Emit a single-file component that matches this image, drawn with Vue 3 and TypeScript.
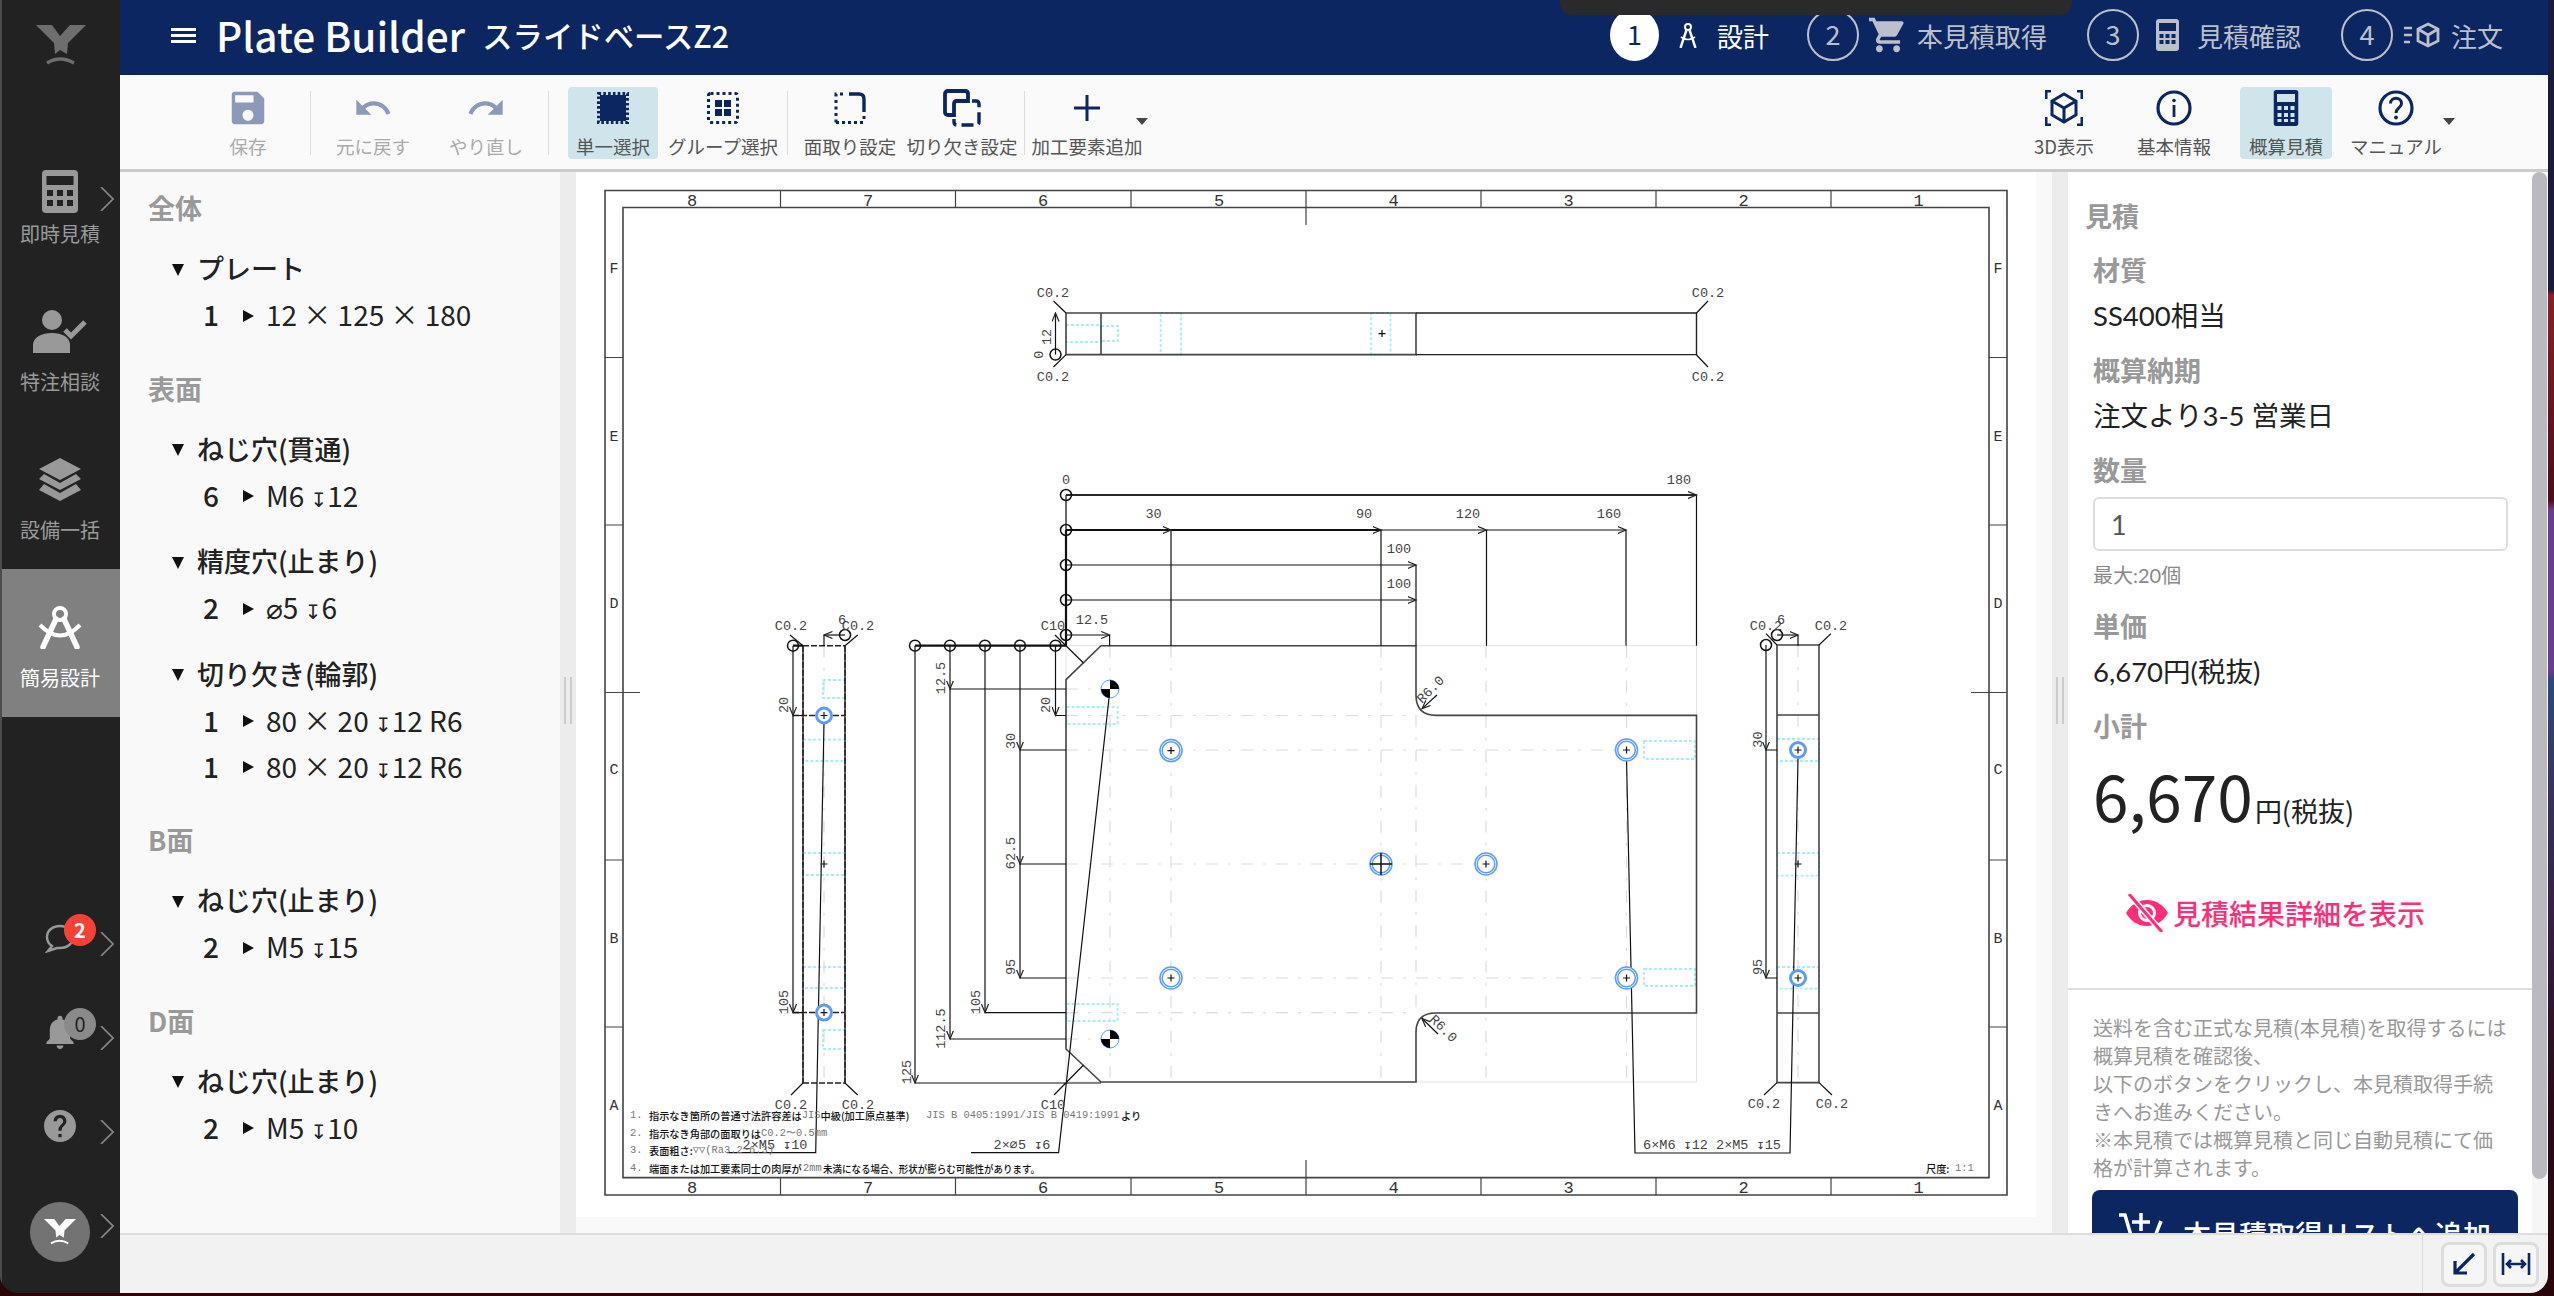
<script setup lang="ts">
type Seg = [number, number, number, number]

const navItems = [
  { label: '即時見積', icon: 'calc', first: true },
  { label: '特注相談', icon: 'person' },
  { label: '設備一括', icon: 'layers' },
  { label: '簡易設計', icon: 'compass', active: true }
]

const steps = [
  { n: 1, label: '設計', icon: 'compass', active: true },
  { n: 2, label: '本見積取得', icon: 'cart' },
  { n: 3, label: '見積確認', icon: 'calc' },
  { n: 4, label: '注文', icon: 'box' }
]

const leftTools = [
  { label: '保存', icon: 'save', w: 90, ml: 83, off: true },
  { sep: true, ml: 17 },
  { label: '元に戻す', icon: 'undo', w: 90, ml: 17, off: true },
  { label: 'やり直し', icon: 'redo', w: 90, ml: 23, off: true },
  { sep: true, ml: 17 },
  { label: '単一選択', icon: 'chip', w: 90, ml: 19, on: true },
  { label: 'グループ選択', icon: 'group', w: 110, ml: 10 },
  { sep: true, ml: 9 },
  { label: '面取り設定', icon: 'chamfer', w: 96, ml: 14 },
  { label: '切り欠き設定', icon: 'notch', w: 114, ml: 7 },
  { sep: true, ml: 5 },
  { label: '加工要素追加', icon: 'plus', w: 114, ml: 5, caret: true }
]

const rightTools = [
  { label: '3D表示', icon: 'cube', w: 90, ml: 0 },
  { label: '基本情報', icon: 'info', w: 90, ml: 20 },
  { label: '概算見積', icon: 'calc', w: 92, ml: 21, on: true },
  { label: 'マニュアル', icon: 'help', w: 100, ml: 14, caret: true }
]

const sections = [
  { title: '全体', groups: [{ name: 'プレート', rows: [['1', '12 × 125 × 180']] }] },
  {
    title: '表面',
    groups: [
      { name: 'ねじ穴(貫通)', rows: [['6', 'M6 ↧12']] },
      { name: '精度穴(止まり)', rows: [['2', '⌀5 ↧6']] },
      { name: '切り欠き(輪郭)', rows: [['1', '80 × 20 ↧12 R6'], ['1', '80 × 20 ↧12 R6']] }
    ]
  },
  { title: 'B面', groups: [{ name: 'ねじ穴(止まり)', rows: [['2', 'M5 ↧15']] }] },
  { title: 'D面', groups: [{ name: 'ねじ穴(止まり)', rows: [['2', 'M5 ↧10']] }] }
]

// drawing coordinates are page pixels, the viewBox starts where the canvas starts
const colX = [692, 868, 1043, 1219, 1393.5, 1568.5, 1743.6, 1918.7]
const colDiv = [780.5, 955.5, 1131, 1306, 1481, 1656, 1831]
const rowDiv = [357.5, 525, 692.5, 860, 1027]
const rowLabels: [string, number][] = [['F', 269], ['E', 437], ['D', 604], ['C', 770.6], ['B', 939], ['A', 1106]]

const arrows: Seg[] = [
  [1055.5, 354.6, 1055.5, 313],
  [1066, 495, 1696.5, 495],
  [1066, 530, 1171, 530], [1171, 530, 1381, 530], [1381, 530, 1486.5, 530], [1486.5, 530, 1626, 530],
  [1066, 565, 1416, 565], [1066, 600, 1416, 600], [1066, 635, 1109.6, 635],
  [915, 645.7, 915, 1083],
  [950, 645.7, 950, 689], [950, 689, 950, 1039],
  [985, 645.7, 985, 1012.6],
  [1020, 645.7, 1020, 750], [1020, 750, 1020, 864], [1020, 864, 1020, 978],
  [1055.5, 645.7, 1055.5, 715.5],
  [793, 645.7, 793, 715.5], [793, 715.5, 793, 1012.6],
  [845, 635, 824, 635],
  [1766, 645, 1766, 750], [1766, 750, 1766, 978],
  [1777, 635, 1798, 635],
  [1437, 695, 1422, 708.6], [1438, 1034, 1422, 1018.5]
]

const thin =
  'M1053.5 301L1066 313M1066 354.6L1053.5 367M1696.5 313L1708 301M1696.5 355L1708 367' +
  'M1171 530V645.7M1381 530V645.7M1486.5 530V645.7M1626 530V645.7M1696.5 495V645.7M1416 565V645.7M1109.6 635V645.7' +
  'M950 689H1066M950 1039H1066M985 1012.6H1066M1020 978H1066M1020 864H1066M1020 750H1066M1055.5 715.5H1066M915 1083H1101' +
  'M1055 635L1083.5 663M1083.5 1065L1054 1095' +
  'M1109 698L1058.6 1152.6H971M824 722L815.7 1152.6H727M1626.5 758.5L1635 1153H1790L1798 758.5' +
  'M824 635V645.7M1798 635V645.7M790 635L803 645.7M857.7 635L845 645.7M803 1083L791 1095M845 1083L857.7 1095' +
  'M1766 633.6L1777 645M1819 645L1831 633.6M1777 1082.6L1764 1095M1819 1082.6L1832 1095M1766 750H1777M1766 978H1777' +
  'M793 715.5H803M793 1012.6H803'

const grayLines =
  'M1066 313H1416V354.6H1066ZM1101 313V354.6M1066 495V645.7' +
  'M1101 645.7H1416V695Q1416 715.4 1436 715.4H1696.5V1013H1436Q1416 1013 1416 1032V1082H1101L1066 1049V679.6Z' +
  'M803 645.7V1083M845 645.7V1083M1777 645H1819V1082.6H1777ZM1777 715H1819M1777 1013H1819'

const ghost = 'M1066 645.7H1696.5V1082H1416M1101 1082H1066V645.7'

const centerLines =
  'M1066 750H1626M1066 978H1626M1066 864H1486M1066 689H1110M1066 1039H1110M1066 715.5H1416M1066 1012.6H1416' +
  'M1110 645.7V1082M1171 645.7V1082M1381 645.7V1082M1486 645.7V1082M1626.5 645.7V1082M1416 715V1013' +
  'M824 645.7V1083M1798 645V1082'

const cyanBoxes: Seg[] = [
  [1066, 325, 35, 17], [1101, 326, 17, 15], [1160.6, 313, 20.4, 41.6], [1371, 313, 19.5, 41.6],
  [1066.6, 707, 51, 17], [1066.6, 1004, 51, 17], [1644, 741, 51, 18], [1644, 969, 51, 17],
  [803, 739.6, 42, 21.4], [803, 853, 42, 22], [803, 967, 42, 21], [823, 680, 22, 18], [823, 1030, 22, 19],
  [1777, 739, 42, 22], [1777, 853, 42, 22.6], [1777, 967, 42, 21.6]
]

const originPts: [number, number][] = [
  [1055.5, 354.6], [1066, 495], [1066, 530], [1066, 565], [1066, 600], [1066, 635],
  [915, 645.7], [950, 645.7], [985, 645.7], [1020, 645.7], [1055.5, 645.7],
  [793, 645.7], [845, 635], [1766, 645], [1777, 635]
]

const doubleRings: [number, number][] = [[1171, 750.6], [1171, 978], [1626.5, 750], [1626.5, 978], [1381, 864], [1486, 864]]
const singleRings: [number, number][] = [[824, 715.5], [824, 1012.6], [1798, 750], [1798, 978]]
const crosses: [number, number][] = [
  [1171, 750.6], [1171, 978], [1626.5, 750], [1626.5, 978], [1486, 864], [824, 715.5], [824, 1012.6],
  [1798, 750], [1798, 978], [824, 864], [1798, 864], [1382, 333.6]
]
const datums: [number, number][] = [[1110, 689], [1110, 1039]]

const labels: { x: number; y: number; t: string; r?: number }[] = [
  { x: 1053, y: 293, t: 'C0.2' }, { x: 1053, y: 377, t: 'C0.2' }, { x: 1708, y: 293, t: 'C0.2' }, { x: 1708, y: 377, t: 'C0.2' },
  { x: 1047, y: 337, t: '12', r: -90 }, { x: 1040, y: 354.6, t: '0', r: -90 },
  { x: 1066, y: 480, t: '0' }, { x: 1679, y: 480, t: '180' },
  { x: 1153.5, y: 514.6, t: '30' }, { x: 1364, y: 514.6, t: '90' }, { x: 1468, y: 514.6, t: '120' }, { x: 1609, y: 514.6, t: '160' },
  { x: 1399, y: 549.6, t: '100' }, { x: 1399, y: 584.6, t: '100' }, { x: 1092, y: 620, t: '12.5' },
  { x: 1053, y: 626, t: 'C10' }, { x: 1053, y: 1105, t: 'C10' },
  { x: 907, y: 1072, t: '125', r: -90 }, { x: 941.6, y: 678, t: '12.5', r: -90 }, { x: 941.6, y: 1028.6, t: '112.5', r: -90 },
  { x: 976, y: 1002, t: '105', r: -90 }, { x: 1011, y: 741, t: '30', r: -90 }, { x: 1011, y: 853, t: '62.5', r: -90 },
  { x: 1011, y: 967, t: '95', r: -90 }, { x: 1046.5, y: 705, t: '20', r: -90 },
  { x: 791, y: 626, t: 'C0.2' }, { x: 858, y: 626, t: 'C0.2' }, { x: 842, y: 620, t: '6' },
  { x: 791, y: 1105, t: 'C0.2' }, { x: 858, y: 1105, t: 'C0.2' },
  { x: 784.5, y: 705, t: '20', r: -90 }, { x: 784.5, y: 1002, t: '105', r: -90 },
  { x: 1766, y: 626, t: 'C0.2' }, { x: 1831, y: 626, t: 'C0.2' }, { x: 1781, y: 620, t: '6' },
  { x: 1764, y: 1104.6, t: 'C0.2' }, { x: 1832, y: 1104.6, t: 'C0.2' },
  { x: 1758.7, y: 739.6, t: '30', r: -90 }, { x: 1758.7, y: 967, t: '95', r: -90 },
  { x: 1431, y: 690, t: 'R6.0', r: -45 }, { x: 1443, y: 1029, t: 'R6.0', r: 45 },
  { x: 775, y: 1145, t: '2×M5 ↧10' }, { x: 1022, y: 1145, t: '2×⌀5 ↧6' }, { x: 1712, y: 1145, t: '6×M6 ↧12 2×M5 ↧15' }
]

function pie(cx: number, cy: number) {
  const r = 9
  return `M${cx} ${cy}V${cy - r}A${r} ${r} 0 0 1 ${cx + r} ${cy}ZM${cx} ${cy}V${cy + r}A${r} ${r} 0 0 1 ${cx - r} ${cy}Z`
}
</script>

<template>
  <div class="window">
    <aside class="sidebar">
      <div class="logo">
        <svg width="50" height="42" viewBox="0 0 50 42">
          <path class="logo-mark" d="M0 0H16L24 11L34 0H50L32 18L31 29L24 25L19 29L18 18Z" />
          <path class="logo-arc" d="M11 38Q24 30 38 38" />
        </svg>
      </div>
      <div
        v-for="item in navItems"
        :key="item.label"
        class="nav-item"
        :class="{ 'nav-item--active': item.active, 'nav-item--first': item.first }"
      >
        <svg v-if="item.icon === 'calc'" class="nav-icon" viewBox="0 0 42 43">
          <rect x="3" width="36" height="43" rx="4" fill="#999" />
          <rect x="7.5" y="6" width="27" height="9" fill="#222" />
          <path d="M8 20h6v6H8zM18 20h6v6h-6zM28 20h6v6h-6zM8 30h6v6H8zM18 30h6v6h-6zM28 30h6v6h-6z" fill="#222" />
        </svg>
        <svg v-else-if="item.icon === 'person'" class="nav-icon" viewBox="0 0 54 43">
          <circle cx="19" cy="10" r="10" fill="#999" />
          <path d="M0 43V35C0 27 9 23 19 23C29 23 37 27 37 35V43Z" fill="#999" />
          <path d="M32 20L38 26L52 12" fill="none" stroke="#999" stroke-width="5" />
        </svg>
        <svg v-else-if="item.icon === 'layers'" class="nav-icon" viewBox="0 0 44 43">
          <path d="M22 0L43 11L22 22L1 11Z" fill="#999" />
          <path d="M6 16L22 25L38 16L43 21L22 32L1 21Z" fill="#999" />
          <path d="M6 26L22 35L38 26L43 32L22 43L1 32Z" fill="#999" />
        </svg>
        <svg v-else class="nav-icon" viewBox="0 0 44 43">
          <circle cx="22" cy="8" r="6" fill="none" stroke="#fff" stroke-width="4" />
          <path d="M18 13L5 41M26 13L39 41" fill="none" stroke="#fff" stroke-width="5.5" stroke-linecap="round" />
          <path d="M2 19Q22 40 42 19" fill="none" stroke="#fff" stroke-width="4" />
        </svg>
        <span class="nav-label">{{ item.label }}</span>
        <svg v-if="item.first" class="chevron" viewBox="0 0 14 24"><path d="M1 0L13 12L1 24" /></svg>
      </div>

      <div class="nav-bottom">
        <div class="nav-row">
          <svg width="30" height="29" viewBox="0 0 30 29">
            <path d="M15 2C7 2 2 7 2 13C2 17 4 20 7 22L3 27L12 24C13 24 14 24 15 24C23 24 28 19 28 13C28 7 23 2 15 2Z" fill="none" stroke="#999" stroke-width="2.4" />
          </svg>
          <span class="badge badge--red">2</span>
          <svg class="chevron" viewBox="0 0 14 24"><path d="M1 0L13 12L1 24" /></svg>
        </div>
        <div class="nav-row">
          <svg width="34" height="34" viewBox="2 2 20 20">
            <path fill="#999" d="M12 22c1.1 0 2-.9 2-2h-4c0 1.1.89 2 2 2zm6-6v-5c0-3.07-1.64-5.64-4.5-6.32V4c0-.83-.67-1.5-1.5-1.5s-1.5.67-1.5 1.5v.68C7.63 5.36 6 7.92 6 11v5l-2 2v1h16v-1l-2-2z" />
          </svg>
          <span class="badge badge--gray">0</span>
          <svg class="chevron" viewBox="0 0 14 24"><path d="M1 0L13 12L1 24" /></svg>
        </div>
        <div class="nav-row">
          <svg width="32" height="32" viewBox="2 2 20 20">
            <path fill="#999" d="M12 2C6.48 2 2 6.48 2 12s4.48 10 10 10 10-4.48 10-10S17.52 2 12 2zm1 17h-2v-2h2v2zm2.07-7.75l-.9.92C13.45 12.9 13 13.5 13 15h-2v-.5c0-1.1.45-2.1 1.17-2.83l1.24-1.26c.37-.36.59-.86.59-1.41 0-1.1-.9-2-2-2s-2 .9-2 2H8c0-2.21 1.79-4 4-4s4 1.79 4 4c0 .88-.36 1.68-.93 2.25z" />
          </svg>
          <svg class="chevron" viewBox="0 0 14 24"><path d="M1 0L13 12L1 24" /></svg>
        </div>
        <div class="nav-row nav-row--avatar">
          <div class="avatar">
            <svg width="32" height="27" viewBox="0 0 50 42">
              <path d="M0 0H16L24 11L34 0H50L32 18L31 29L24 25L19 29L18 18Z" fill="#fff" />
              <path d="M11 38Q24 30 38 38" fill="none" stroke="#fff" stroke-width="3" />
            </svg>
          </div>
          <svg class="chevron" viewBox="0 0 14 24"><path d="M1 0L13 12L1 24" /></svg>
        </div>
      </div>
    </aside>

    <div class="main">
      <header class="topbar">
        <div class="hamburger"><i /><i /><i /></div>
        <h1 class="title">Plate Builder</h1>
        <span class="subtitle">スライドベースZ2</span>
        <div class="notch" />
        <div class="steps">
          <div v-for="s in steps" :key="s.n" class="step" :class="{ 'step--active': s.active }">
            <span class="step-num">{{ s.n }}</span>
            <span class="step-icon">
              <svg v-if="s.icon === 'compass'" width="18" height="26" viewBox="0 0 18 26">
                <circle cx="9" cy="5" r="3" fill="none" stroke="#fff" stroke-width="2" />
                <path d="M7.5 8L1.5 26M10.5 8L16.5 26" fill="none" stroke="#fff" stroke-width="2.4" />
                <path d="M2 15Q9 20 16 15" fill="none" stroke="#fff" stroke-width="1.6" />
              </svg>
              <svg v-else-if="s.icon === 'cart'" width="38" height="38" viewBox="1 1 22 22">
                <path fill="#bcc0cb" d="M7 18c-1.1 0-1.99.9-1.99 2S5.9 22 7 22s2-.9 2-2-.9-2-2-2zM1 2v2h2l3.6 7.59-1.35 2.45c-.16.28-.25.61-.25.96 0 1.1.9 2 2 2h12v-2H7.42c-.14 0-.25-.11-.25-.25l.03-.12.9-1.63h7.45c.75 0 1.41-.41 1.75-1.03l3.58-6.49c.08-.14.12-.31.12-.48 0-.55-.45-1-1-1H5.21l-.94-2H1zm16 16c-1.1 0-1.99.9-1.99 2s.89 2 1.99 2 2-.9 2-2-.9-2-2-2z" />
              </svg>
              <svg v-else-if="s.icon === 'calc'" width="23" height="32" viewBox="0 0 23 32">
                <rect width="23" height="32" rx="3" fill="#bcc0cb" />
                <rect x="3" y="4" width="17" height="8" fill="#0c2661" />
                <path d="M3.500 15h4v4h-4zM9.500 15h4v4h-4zM15.500 15h4v4h-4zM3.500 21h4v4h-4zM9.500 21h4v4h-4zM15.500 21h4v4h-4z" fill="#0c2661" />
              </svg>
              <svg v-else width="36" height="26" viewBox="0 0 36 26">
                <path d="M0 6H8M0 13H8M0 20H6" stroke="#bcc0cb" stroke-width="2.6" />
                <path d="M24 2L34 7V19L24 24L14 19V7ZM14 7L24 13L34 7M24 13V24" fill="none" stroke="#bcc0cb" stroke-width="2.8" />
              </svg>
            </span>
            <span class="step-label">{{ s.label }}</span>
          </div>
        </div>
      </header>

      <div class="toolbar">
        <template v-for="(t, i) in leftTools" :key="i">
          <span v-if="t.sep" class="tool-sep" :style="{ marginLeft: t.ml + 'px' }" />
          <button
            v-else
            class="tool"
            :class="{ 'tool--on': t.on, 'tool--off': t.off }"
            :style="{ width: t.w + 'px', marginLeft: t.ml + 'px' }"
          >
            <svg v-if="t.icon === 'save'" class="tool-icon" viewBox="3 3 18 18" width="33" height="33">
              <path fill="#8c99b8" d="M17 3H5c-1.11 0-2 .9-2 2v14c0 1.1.89 2 2 2h14c1.1 0 2-.9 2-2V7l-4-4zm-5 16c-1.66 0-3-1.34-3-3s1.34-3 3-3 3 1.34 3 3-1.34 3-3 3zm3-10H5V5h10v4z" />
            </svg>
            <svg v-else-if="t.icon === 'undo'" class="tool-icon" viewBox="0 0 24 24" width="40" height="40">
              <path fill="#8c99b8" d="M12.500 8c-2.650 0-5.050.99-6.900 2.600L2 7v9h9l-3.620-3.620c1.390-1.160 3.160-1.880 5.120-1.880 3.540 0 6.550 2.310 7.600 5.500l2.370-.78C21.080 11.030 17.150 8 12.500 8z" />
            </svg>
            <svg v-else-if="t.icon === 'redo'" class="tool-icon" viewBox="0 0 24 24" width="40" height="40">
              <path fill="#8c99b8" d="M18.400 10.600C16.550 8.990 14.150 8 11.500 8c-4.650 0-8.580 3.030-9.960 7.220L3.900 16c1.050-3.190 4.050-5.500 7.600-5.500 1.950 0 3.730.72 5.120 1.880L13 16h9V7l-3.600 3.600z" />
            </svg>
            <svg v-else-if="t.icon === 'chip'" class="tool-icon" viewBox="0 0 32 32" width="32" height="32">
              <rect x="1.500" y="1.500" width="29" height="29" fill="none" stroke="#0c2661" stroke-width="3" stroke-dasharray="2.600 2.200" />
              <rect x="3" y="3" width="26" height="26" fill="#0c2661" />
            </svg>
            <svg v-else-if="t.icon === 'group'" class="tool-icon" viewBox="0 0 32 32" width="32" height="32">
              <rect x="1.500" y="1.500" width="29" height="29" rx="2" fill="none" stroke="#0c2661" stroke-width="3" stroke-dasharray="3 3" />
              <path d="M8 8h7v7H8zM17 8h7v7h-7zM8 17h7v7H8zM17 17h7v7h-7z" fill="#0c2661" />
            </svg>
            <svg v-else-if="t.icon === 'chamfer'" class="tool-icon" viewBox="0 0 32 32" width="32" height="32">
              <path d="M2 30.500V2H10" fill="none" stroke="#0c2661" stroke-width="3" stroke-dasharray="3 3.500" />
              <path d="M2 30.500H31" fill="none" stroke="#0c2661" stroke-width="3" stroke-dasharray="3 3" />
              <path d="M15 2H25Q30 2 30 7V20" fill="none" stroke="#0c2661" stroke-width="3.400" />
              <path d="M30 24V30" fill="none" stroke="#0c2661" stroke-width="3" stroke-dasharray="3 3" />
            </svg>
            <svg v-else-if="t.icon === 'notch'" class="tool-icon" viewBox="0 0 38 38" width="38" height="38">
              <path d="M11 26H5Q2 26 2 23V5Q2 2 5 2H22Q25 2 25 5V12H14Q11 12 11 15Z" fill="none" stroke="#0c2661" stroke-width="3.800" />
              <path d="M29 12H33Q36 12 36 15V33Q36 36 33 36H14Q11 36 11 33V30" fill="none" stroke="#0c2661" stroke-width="3.400" stroke-dasharray="12 5" />
            </svg>
            <svg v-else class="tool-icon" viewBox="0 0 26 26" width="26" height="26">
              <path d="M13 0V26M0 13H26" stroke="#0c2661" stroke-width="3" />
            </svg>
            <span class="tool-label">{{ t.label }}</span>
            <i v-if="t.caret" class="caret" />
          </button>
        </template>

        <div class="toolbar-right">
          <button
            v-for="t in rightTools"
            :key="t.label"
            class="tool"
            :class="{ 'tool--on': t.on }"
            :style="{ width: t.w + 'px', marginLeft: t.ml + 'px' }"
          >
            <svg v-if="t.icon === 'cube'" class="tool-icon" viewBox="0 0 38 36" width="38" height="36">
              <path d="M6 1H1V9M32 1H37V9M1 27V35H6M37 27V35H32" fill="none" stroke="#0c2661" stroke-width="3" />
              <path d="M19 4L31 11V25L19 32L7 25V11ZM7 11L19 18L31 11M19 18V32" fill="none" stroke="#0c2661" stroke-width="3" />
            </svg>
            <svg v-else-if="t.icon === 'info'" class="tool-icon" viewBox="0 0 36 36" width="36" height="36">
              <circle cx="18" cy="18" r="16" fill="none" stroke="#0c2661" stroke-width="3.200" />
              <path d="M18 15V27" stroke="#0c2661" stroke-width="2.800" />
              <circle cx="18" cy="10.500" r="1.800" fill="#0c2661" />
            </svg>
            <svg v-else-if="t.icon === 'calc'" class="tool-icon" viewBox="0 0 25 36" width="25" height="36">
              <rect width="25" height="36" rx="3" fill="#0c2661" />
              <rect x="3.500" y="4" width="18" height="8" fill="#cfe5eb" />
              <path d="M4 16h4v4H4zM10.500 16h4v4h-4zM17 16h4v4h-4zM4 23h4v4H4zM10.500 23h4v4h-4zM17 23h4v4h-4zM4 29h4v3H4zM10.500 29h4v3h-4zM17 29h4v3h-4z" fill="#cfe5eb" />
            </svg>
            <svg v-else class="tool-icon" viewBox="0 0 36 36" width="36" height="36">
              <circle cx="18" cy="18" r="16" fill="none" stroke="#0c2661" stroke-width="3.200" />
              <path d="M12.500 13.500C12.500 6.500 23.500 6.500 23.500 13.500C23.500 18 18 18 18 23" fill="none" stroke="#0c2661" stroke-width="3" />
              <circle cx="18" cy="27.500" r="1.900" fill="#0c2661" />
            </svg>
            <span class="tool-label">{{ t.label }}</span>
            <i v-if="t.caret" class="caret caret--right" />
          </button>
        </div>
      </div>

      <div class="workspace">
        <section class="tree">
          <div v-for="sec in sections" :key="sec.title" class="tree-section">
            <h2 class="section-title">{{ sec.title }}</h2>
            <div v-for="g in sec.groups" :key="g.name" class="tree-group">
              <div class="tree-head"><i class="tri-down" />{{ g.name }}</div>
              <div v-for="(r, i) in g.rows" :key="i" class="tree-row">
                <span class="tree-count">{{ r[0] }}</span>
                <i class="tri-right" />
                <span class="tree-value">
                  <template v-for="(part, j) in r[1].split('↧')" :key="j"><span v-if="j" class="depth">↧</span>{{ part }}</template>
                </span>
              </div>
            </div>
          </div>
        </section>

        <div class="splitter"><i class="grip" /></div>

        <section class="canvas">
          <svg class="drawing" width="1460" height="1045" viewBox="576 172 1460 1045">
            <defs>
              <marker id="dim-arrow" markerUnits="userSpaceOnUse" markerWidth="10" markerHeight="8" refX="8.500" refY="4" orient="auto">
                <path d="M0 0.500L8.500 4L0 7.500" fill="none" stroke="#222" stroke-width="1.200" />
              </marker>
            </defs>

            <path class="frame" d="M605 190.500H2007V1195H605ZM623 207.500H1989V1177.600H623Z" />
            <path
              v-for="x in colDiv"
              :key="'c' + x"
              class="frame-thin"
              :d="`M${x} 190.5V${x === 1306 ? 225 : 207.5}M${x} ${x === 1306 ? 1160 : 1177.6}V1195`"
            />
            <path
              v-for="y in rowDiv"
              :key="'r' + y"
              class="frame-thin"
              :d="`M605 ${y}H${y === 692.5 ? 640 : 623}M${y === 692.5 ? 1971 : 1989} ${y}H2007`"
            />
            <g class="frame-text">
              <template v-for="(x, i) in colX" :key="'n' + i">
                <text :x="x" y="201">{{ 8 - i }}</text>
                <text :x="x" y="1188">{{ 8 - i }}</text>
              </template>
            </g>
            <g class="frame-text frame-text--small">
              <template v-for="l in rowLabels" :key="l[0]">
                <text x="614" :y="l[1]">{{ l[0] }}</text>
                <text x="1998" :y="l[1]">{{ l[0] }}</text>
              </template>
            </g>

            <path class="ghost" :d="ghost" />
            <path class="center" :d="centerLines" />
            <rect
              v-for="(b, i) in cyanBoxes"
              :key="'b' + i"
              class="cyan"
              :x="b[0]"
              :y="b[1]"
              :width="b[2]"
              :height="b[3]"
            />

            <path class="outline" :d="grayLines" />
            <path class="outline-black" d="M1416 313H1696.500V354.600H1416" />
            <path class="side-dash" d="M803 645.700H845M803 1083H845M803 645.700V1083M845 645.700V1083M793 715.500H845M793 1012.600H845" />
            <path class="thin" :d="thin" />
            <path class="bold" d="M1066 530H1381M1066 530V645.700M915 645.700H1066M793 645.700H803" />
            <path class="heavy" d="M1066 495H1696.500" />

            <line
              v-for="(a, i) in arrows"
              :key="'a' + i"
              class="arrow"
              :x1="a[0]"
              :y1="a[1]"
              :x2="a[2]"
              :y2="a[3]"
              marker-end="url(#dim-arrow)"
            />

            <circle v-for="p in originPts" :key="'o' + p[0] + p[1]" class="origin" :cx="p[0]" :cy="p[1]" r="5.500" />
            <g v-for="p in doubleRings" :key="'d' + p[0] + p[1]" class="ring">
              <circle :cx="p[0]" :cy="p[1]" r="11" />
              <circle :cx="p[0]" :cy="p[1]" r="8.800" />
            </g>
            <circle v-for="p in singleRings" :key="'s' + p[0] + p[1]" class="ring-thick" :cx="p[0]" :cy="p[1]" r="7.500" />
            <path
              v-for="p in crosses"
              :key="'x' + p[0] + p[1]"
              class="cross"
              :d="`M${p[0] - 3.5} ${p[1]}H${p[0] + 3.5}M${p[0]} ${p[1] - 3.5}V${p[1] + 3.5}`"
            />
            <path class="cross-big" d="M1370 864H1392M1381 853V875" />
            <g v-for="p in datums" :key="'p' + p[1]">
              <circle class="datum" :cx="p[0]" :cy="p[1]" r="9" />
              <path :d="pie(p[0], p[1])" fill="#000" />
            </g>

            <text
              v-for="(l, i) in labels"
              :key="'t' + i"
              class="dim-text"
              :x="l.x"
              :y="l.y"
              :transform="l.r ? `rotate(${l.r} ${l.x} ${l.y})` : undefined"
            >{{ l.t }}</text>

            <text class="note" y="1115">
              <tspan x="630" class="note-latin">1.</tspan>
              <tspan x="649">指示なき箇所の普通寸法許容差は</tspan><tspan class="note-latin">JIS</tspan><tspan>中級(加工原点基準)</tspan>
              <tspan x="926" class="note-latin">JIS B 0405:1991/JIS B 0419:1991</tspan><tspan x="1121">より</tspan>
            </text>
            <text class="note" y="1133">
              <tspan x="630" class="note-latin">2.</tspan>
              <tspan x="649">指示なき角部の面取りは</tspan><tspan class="note-latin">C0.2〜0.5mm</tspan>
            </text>
            <text class="note" y="1150">
              <tspan x="630" class="note-latin">3.</tspan>
              <tspan x="649">表面粗さ:</tspan><tspan class="note-latin">▽▽(Ra3.2~6.3)</tspan>
            </text>
            <text class="note" y="1168">
              <tspan x="630" class="note-latin">4.</tspan>
              <tspan x="649">端面または加工要素同士の肉厚が</tspan><tspan x="803" class="note-latin">2mm</tspan>
            </text>
            <text class="note" x="823" y="1168" textLength="217" lengthAdjust="spacingAndGlyphs">未満になる場合、形状が膨らむ可能性があります。</text>
            <text class="note" y="1168">
              <tspan x="1926">尺度:</tspan><tspan x="1955" class="note-latin">1:1</tspan>
            </text>
          </svg>
        </section>

        <div class="splitter"><i class="grip" /></div>

        <section class="quote">
          <div class="quote-body">
            <h2 class="quote-title">見積</h2>
            <div class="q-label">材質</div>
            <div class="q-value">SS400相当</div>
            <div class="q-label">概算納期</div>
            <div class="q-value">注文より3-5 営業日</div>
            <div class="q-label">数量</div>
            <input class="q-input" value="1" />
            <div class="q-note">最大:20個</div>
            <div class="q-label q-label--gap">単価</div>
            <div class="q-value">6,670円(税抜)</div>
            <div class="q-label">小計</div>
            <div class="q-total"><b>6,670</b><span>円(税抜)</span></div>
            <a class="q-link">
              <svg width="42" height="38" viewBox="0 0 42 38">
                <path d="M21 6C11 6 4 12 0 19C4 26 11 32 21 32C31 32 38 26 42 19C38 12 31 6 21 6Z" fill="#ff2d78" />
                <circle cx="21" cy="19" r="7.500" fill="none" stroke="#fff" stroke-width="3" />
                <path d="M4 1L35 37" stroke="#fff" stroke-width="6" />
                <path d="M3 0L36 38" stroke="#ff2d78" stroke-width="3" />
              </svg>
              <span>見積結果詳細を表示</span>
            </a>
            <hr class="q-divider" />
            <p class="q-text">
              送料を含む正式な見積(本見積)を取得するには概算見積を確認後、<br />以下のボタンをクリックし、本見積取得手続きへお進みください。<br />※本見積では概算見積と同じ自動見積にて価格が計算されます。
            </p>
            <button class="q-button">
              <svg width="44" height="42" viewBox="0 0 44 42">
                <path d="M0 2H6L13 26H35L42 8" fill="none" stroke="#fff" stroke-width="3.500" />
                <path d="M22 0V18M13 9H31" stroke="#fff" stroke-width="3.500" />
              </svg>
              本見積取得リストへ追加
            </button>
          </div>
          <div class="scroll-track"><i class="scroll-thumb" /></div>
        </section>
      </div>

      <footer class="statusbar">
        <span class="status-sep" />
        <button class="status-btn">
          <svg width="24" height="24" viewBox="0 0 24 24"><path d="M22 2L3 21M3 9V21H15" fill="none" stroke="#0c2661" stroke-width="3.200" /></svg>
        </button>
        <button class="status-btn">
          <svg width="30" height="24" viewBox="0 0 30 24"><path d="M2 1V23M28 1V23M6 12H24M10 8L6 12L10 16M20 8L24 12L20 16" fill="none" stroke="#0c2661" stroke-width="2.600" /></svg>
        </button>
      </footer>
    </div>
  </div>
</template>

<style>
html,
body {
  margin: 0;
  height: 1296px;
  overflow: hidden;
}

body {
  background: linear-gradient(180deg, #1b1a3c 0 290px, #8b1f25 295px, #4a0c1c 500px, #6a3c8c 510px, #6a3c8c 670px, #2b4a7a 680px, #37305f 800px, #2a0a18 1100px, #2a0508 1296px);
}
</style>

<style scoped>
.window {
  display: flex;
  width: 2548px;
  height: 1293px;
  overflow: hidden;
  border-bottom-left-radius: 18px;
  border-bottom-right-radius: 18px;
  font-family: "Noto Sans CJK JP", "Noto Sans", sans-serif;
  color: #222;
}

.sidebar {
  display: flex;
  flex-direction: column;
  flex: none;
  box-sizing: border-box;
  width: 120px;
  background: #222;
  box-shadow: inset 2px 0 #4c4c4c;
}

.logo {
  display: flex;
  justify-content: center;
  box-sizing: border-box;
  height: 125px;
  padding-top: 25px;
  padding-left: 2px;
}

.logo-mark {
  fill: #6e6e6e;
}

.logo-arc {
  fill: none;
  stroke: #6e6e6e;
  stroke-width: 3.500;
}

.nav-item {
  position: relative;
  display: flex;
  flex-direction: column;
  align-items: center;
  box-sizing: border-box;
  height: 148px;
  padding-top: 37px;
  color: #9a9a9a;
}

.nav-item--first {
  padding-top: 45px;
}

.nav-item--first .nav-label {
  margin-top: 7px;
}

.nav-item--active {
  background: #808080;
  color: #fff;
  box-shadow: inset 2px 0 #4c4c4c;
}

.nav-icon {
  height: 43px;
  width: 54px;
}

.nav-label {
  margin-top: 15px;
  font-size: 20px;
  line-height: 28px;
}

.chevron {
  position: absolute;
  top: 50%;
  left: 100px;
  width: 14px;
  height: 24px;
  margin-top: -12px;
  fill: none;
  stroke: #8a8a8a;
  stroke-width: 1.600;
}

.nav-bottom {
  margin-top: auto;
  padding-bottom: 20px;
}

.nav-row {
  position: relative;
  display: flex;
  align-items: center;
  justify-content: center;
  box-sizing: border-box;
  height: 94px;
  padding-bottom: 12px;
}

.nav-row--avatar {
  padding-top: 12px;
  padding-bottom: 0;
}

.badge {
  position: absolute;
  top: 17px;
  left: 64px;
  width: 32px;
  height: 32px;
  border-radius: 50%;
  font-size: 20px;
  line-height: 32px;
  text-align: center;
}

.badge--red {
  background: #f44336;
  color: #fff;
  font-weight: 700;
}

.badge--gray {
  background: #8a8a8a;
  color: #222;
}

.avatar {
  display: flex;
  align-items: center;
  justify-content: center;
  width: 60px;
  height: 60px;
  border-radius: 50%;
  background: #737373;
}

.main {
  display: flex;
  flex-direction: column;
  flex: 1;
  min-width: 0;
}

.topbar {
  position: relative;
  display: flex;
  align-items: center;
  flex: none;
  box-sizing: border-box;
  height: 75px;
  padding-bottom: 5px;
  background: #0c2661;
  color: #fff;
}

.hamburger {
  display: flex;
  flex-direction: column;
  justify-content: space-between;
  width: 25px;
  height: 15px;
  margin-left: 51px;
}

.hamburger i {
  display: block;
  height: 3px;
  background: #fff;
}

.title {
  margin: 0 0 0 20px;
  font-size: 40.500px;
  font-weight: 500;
  line-height: 60px;
  white-space: nowrap;
}

.subtitle {
  margin-left: 17px;
  font-size: 30.400px;
  font-weight: 500;
  white-space: nowrap;
}

.notch {
  position: absolute;
  top: 0;
  left: 1440px;
  width: 512px;
  height: 15px;
  background: #2a2a2d;
  border-bottom-left-radius: 12px;
  border-bottom-right-radius: 12px;
  z-index: 2;
}

.steps {
  display: flex;
  gap: 40px;
  margin-left: auto;
  padding-right: 45px;
}

.step {
  display: flex;
  align-items: center;
  color: #bcc0cb;
}

.step--active {
  color: #fff;
  margin-right: -2px;
}

.step-num {
  box-sizing: border-box;
  width: 52px;
  height: 52px;
  border: 2px solid #bcc0cb;
  border-radius: 50%;
  font-size: 27px;
  line-height: 46px;
  text-align: center;
}

.step--active .step-num {
  width: 49px;
  background: #fff;
  border-color: #fff;
  color: #0c2661;
}

.step-icon {
  display: flex;
  align-items: center;
  justify-content: center;
  width: 58px;
}

.step-label {
  font-size: 26px;
  white-space: nowrap;
}

.toolbar {
  display: flex;
  align-items: flex-start;
  flex: none;
  box-sizing: border-box;
  height: 97px;
  padding-top: 12px;
  background: #fafafa;
  border-bottom: 3px solid #ccc;
}

.toolbar-right {
  display: flex;
  margin-left: auto;
  padding-right: 102px;
}

.tool {
  position: relative;
  display: flex;
  flex-direction: column;
  align-items: center;
  justify-content: flex-start;
  flex: none;
  box-sizing: border-box;
  height: 72px;
  padding: 0;
  border: 0;
  border-radius: 4px;
  background: transparent;
  font-family: inherit;
}

.tool--on {
  background: #cfe5eb;
}

.tool-icon {
  position: absolute;
  top: 21px;
  left: 50%;
  transform: translate(-50%, -50%);
}

.tool-label {
  position: absolute;
  bottom: 1px;
  left: -8px;
  right: -8px;
  font-size: 18.500px;
  line-height: 24px;
  color: #555;
  text-align: center;
  white-space: nowrap;
}

.tool--off .tool-label {
  color: #aaa;
}

.tool-sep {
  flex: none;
  width: 1px;
  height: 64px;
  margin-top: 4px;
  background: #ddd;
}

.caret {
  position: absolute;
  top: 31px;
  right: -4px;
  border-top: 7px solid #444;
  border-left: 6px solid transparent;
  border-right: 6px solid transparent;
}

.caret--right {
  right: -9px;
}

.workspace {
  display: flex;
  flex: 1;
  min-height: 0;
}

.tree {
  flex: none;
  box-sizing: border-box;
  width: 440px;
  padding: 13px 0 0 28px;
  background: #f9f9f9;
}

.tree-section {
  margin-bottom: 28.600px;
}

.section-title {
  margin: 0 0 14px;
  font-size: 27px;
  font-weight: 700;
  line-height: 46px;
  color: #999;
}

.tree-group {
  margin-bottom: 20.500px;
}

.tree-group:last-child {
  margin-bottom: 0;
}

.tree-head {
  display: flex;
  align-items: center;
  font-size: 27px;
  font-weight: 500;
  line-height: 46px;
}

.tri-down {
  width: 0;
  height: 0;
  margin: 3px 13px 0 24px;
  border-top: 12px solid #111;
  border-left: 6px solid transparent;
  border-right: 6px solid transparent;
}

.tree-row {
  display: flex;
  align-items: center;
  height: 46px;
  font-family: "Noto Sans CJK JP", "DejaVu Sans", sans-serif;
  font-size: 28px;
  line-height: 46px;
  white-space: nowrap;
}

.tree-value {
  height: 46px;
}

.tree-count {
  width: 40px;
  margin-left: 55px;
  font-weight: 500;
}

.tri-right {
  width: 0;
  height: 0;
  margin: 3px 12px 0 0;
  border-left: 11px solid #111;
  border-top: 6px solid transparent;
  border-bottom: 6px solid transparent;
}

.depth {
  font-size: 20px;
  line-height: 0;
}

.splitter {
  display: flex;
  align-items: flex-start;
  justify-content: center;
  flex: none;
  width: 16px;
  background: #ececec;
}

.grip {
  box-sizing: border-box;
  width: 8px;
  height: 47px;
  margin-top: 505px;
  border-left: 2px solid #ccc;
  border-right: 2px solid #ccc;
}

.canvas {
  flex: 1;
  min-width: 0;
  background: #f9f9f9;
}

.drawing {
  display: block;
  background: #fff;
}

.frame {
  fill: none;
  stroke: #444;
  stroke-width: 1.600;
}

.frame-thin {
  fill: none;
  stroke: #444;
  stroke-width: 1.200;
}

.frame-text text {
  font-family: "Liberation Mono", monospace;
  font-size: 17px;
  fill: #333;
  text-anchor: middle;
  dominant-baseline: central;
}

.frame-text--small text {
  font-size: 15px;
}

.ghost {
  fill: none;
  stroke: #e2e2e2;
  stroke-width: 1;
}

.center {
  fill: none;
  stroke: #dcdcdc;
  stroke-width: 1.200;
  stroke-dasharray: 12 10 3 10;
}

.cyan {
  fill: none;
  stroke: #a5eef7;
  stroke-width: 1.800;
  stroke-dasharray: 3 2;
}

.outline {
  fill: none;
  stroke: #444;
  stroke-width: 1.600;
}

.outline-black {
  fill: none;
  stroke: #222;
  stroke-width: 1.400;
}

.side-dash {
  fill: none;
  stroke: #222;
  stroke-width: 1.500;
  stroke-dasharray: 6 2;
}

.thin {
  fill: none;
  stroke: #111;
  stroke-width: 1.200;
}

.bold {
  fill: none;
  stroke: #111;
  stroke-width: 2.200;
}

.heavy {
  fill: none;
  stroke: #444;
  stroke-width: 2;
}

.arrow {
  stroke: #111;
  stroke-width: 1.200;
}

.origin {
  fill: none;
  stroke: #111;
  stroke-width: 1.500;
}

.ring circle {
  fill: #fff;
  stroke: #5b9bff;
  stroke-width: 1.500;
}

.ring-thick {
  fill: #fff;
  stroke: #5b9bff;
  stroke-width: 3;
}

.cross {
  fill: none;
  stroke: #111;
  stroke-width: 1.200;
}

.cross-big {
  fill: none;
  stroke: #111;
  stroke-width: 1.500;
}

.datum {
  fill: #fff;
  stroke: #5b9bff;
  stroke-width: 1;
}

.dim-text {
  font-family: "Liberation Mono", "DejaVu Sans Mono", monospace;
  font-size: 13.500px;
  fill: #444;
  text-anchor: middle;
  dominant-baseline: central;
}

.note {
  font-family: "Noto Sans CJK JP", sans-serif;
  font-size: 10.200px;
  font-weight: 500;
  fill: #111;
  dominant-baseline: central;
}

.note-latin {
  font-family: "Liberation Mono", "DejaVu Sans Mono", monospace;
  font-size: 10.400px;
  font-weight: 400;
  fill: #777;
}

.quote {
  display: flex;
  flex: none;
  width: 480px;
  background: #fff;
}

.quote-body {
  flex: none;
  box-sizing: border-box;
  width: 464px;
  padding: 21px 0 0 25px;
  overflow: hidden;
}

.quote-title {
  margin: 0 0 0 -8px;
  font-size: 27px;
  font-weight: 700;
  line-height: 46px;
  color: #999;
}

.q-label {
  margin-top: 8px;
  font-size: 27px;
  font-weight: 700;
  line-height: 46px;
  color: #999;
}

.q-label--gap {
  margin-top: 14px;
}

.q-value {
  font-family: Lato, "Noto Sans CJK JP", sans-serif;
  font-size: 27.500px;
  line-height: 46px;
  white-space: nowrap;
}

.q-input {
  display: block;
  box-sizing: border-box;
  width: 415px;
  height: 54px;
  margin-top: 4px;
  padding: 0 16px;
  border: 2px solid #ddd;
  border-radius: 6px;
  background: #fff;
  font-family: Lato, sans-serif;
  font-size: 27px;
  color: #555;
  outline: none;
}

.q-note {
  margin-top: 10px;
  font-family: Lato, "Noto Sans CJK JP", sans-serif;
  font-size: 20px;
  line-height: 28px;
  color: #888;
}

.q-total {
  display: flex;
  align-items: baseline;
  height: 90px;
  margin-top: 0;
  white-space: nowrap;
}

.q-total b {
  font-size: 64px;
  font-weight: 400;
  line-height: 90px;
}

.q-total span {
  margin-left: 2px;
  font-size: 27px;
}

.q-link {
  display: flex;
  align-items: center;
  gap: 5px;
  height: 50px;
  margin: 49px 0 0 33px;
  font-size: 28px;
  font-weight: 500;
  color: #ff2d78;
  white-space: nowrap;
}

.q-divider {
  height: 2px;
  margin: 50px 0 0 -25px;
  border: 0;
  background: #ddd;
}

.q-text {
  width: 415px;
  margin: 24px 0 0;
  font-size: 20px;
  line-height: 28px;
  color: #999;
}

.q-button {
  display: flex;
  align-items: center;
  justify-content: center;
  gap: 20px;
  box-sizing: border-box;
  width: 426px;
  height: 88px;
  margin: 8px 0 0 -1px;
  border: 0;
  border-radius: 8px;
  background: #0c2661;
  font-family: inherit;
  font-size: 28px;
  font-weight: 500;
  color: #fff;
  white-space: nowrap;
}

.scroll-track {
  flex: none;
  width: 16px;
  background: #f6f6f6;
}

.scroll-thumb {
  display: block;
  width: 15px;
  height: 1007px;
  border-radius: 8px;
  background: #b9b9bf;
}

.statusbar {
  display: flex;
  align-items: center;
  flex: none;
  box-sizing: border-box;
  height: 60px;
  padding-right: 9px;
  background: #f2f2f2;
  border-top: 2px solid #ddd;
  z-index: 1;
}

.status-sep {
  width: 1px;
  height: 100%;
  margin-left: auto;
  margin-right: 12px;
  background: #ddd;
}

.status-btn {
  display: flex;
  align-items: center;
  justify-content: center;
  box-sizing: border-box;
  width: 46px;
  height: 45px;
  margin-left: 6px;
  padding: 0;
  border: 3px solid #ddd;
  border-radius: 8px;
  background: #f6f6f6;
}
</style>
